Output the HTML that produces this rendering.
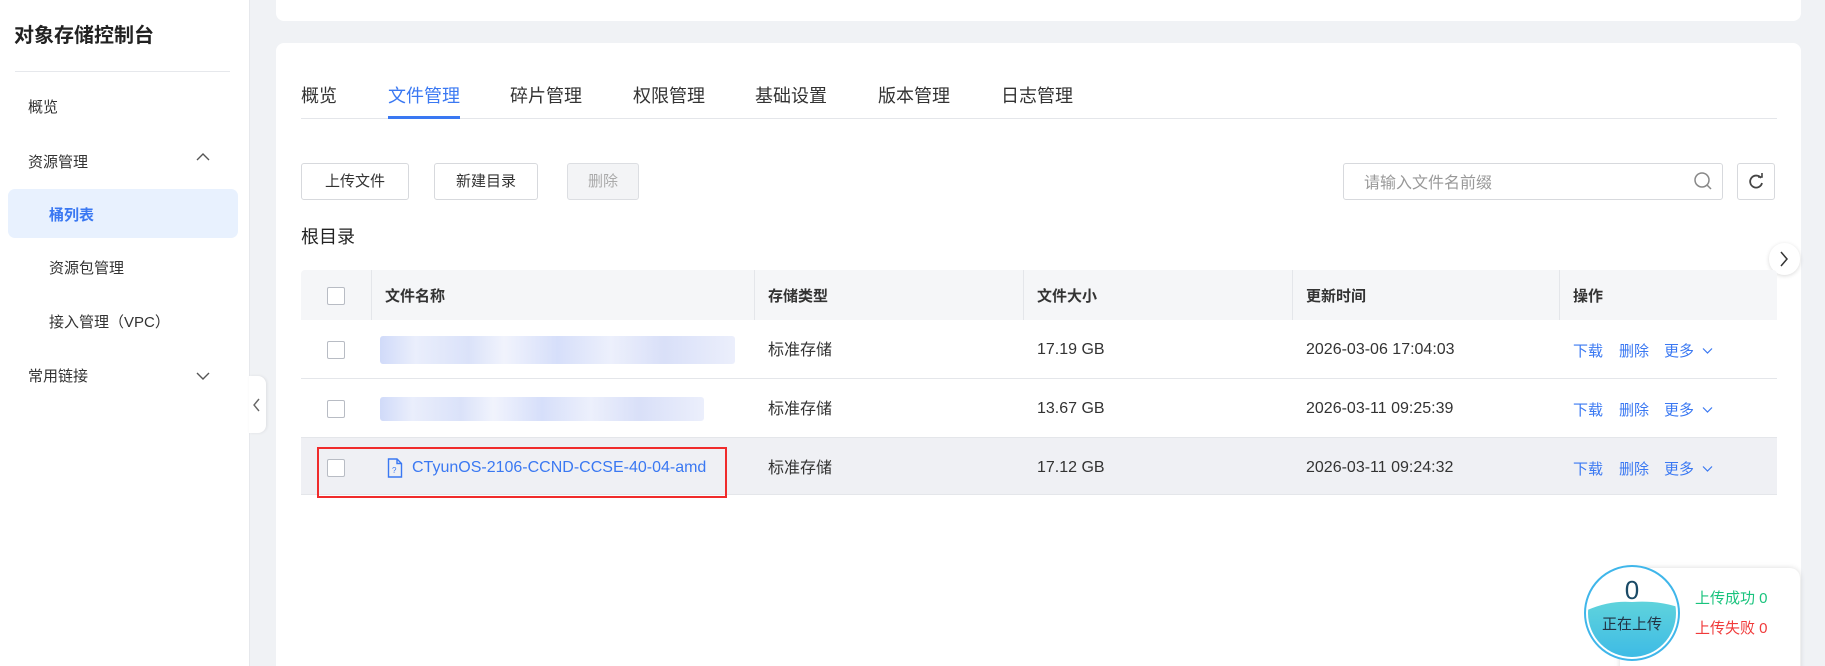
<!DOCTYPE html>
<html><head><meta charset="utf-8">
<style>
*{margin:0;padding:0;box-sizing:border-box}
html,body{width:1825px;height:666px;overflow:hidden}
body{background:#f0f2f5;font-family:"Liberation Sans","Noto Sans CJK SC",sans-serif;color:#333;position:relative}
.a{position:absolute;white-space:nowrap;line-height:1}
.t{transform:translateY(2px)}
.side{position:absolute;left:0;top:0;width:250px;height:666px;background:#fff;border-right:1px solid #e6e8ec}
.card{position:absolute;background:#fff;border-radius:8px}
.tab{font-size:18px;color:#333;top:87px}
.btn{position:absolute;top:163px;height:37px;border:1px solid #d7d9dd;border-radius:3px;font-size:15px;text-align:center;line-height:35px;background:#fff;color:#333}
.cb{position:absolute;width:18px;height:18px;border:1px solid #b8bcc4;border-radius:2px;background:#fff}
.th{font-size:15px;font-weight:bold;color:#333;top:289px}
.td{font-size:16px;color:#333}
.lk{font-size:15px;color:#3a78f2}
.vd{position:absolute;top:270px;width:1px;height:50px;background:#e4e6ea}
.blur{position:absolute;background:linear-gradient(90deg,#c8d4f8,#e6ebfb 10%,#d4ddf8 25%,#eef1fc 35%,#cfd9f9 50%,#e9edfb 65%,#d2daf7 80%,#e8ecfb);opacity:.85;border-radius:3px}
</style></head><body>
<div class="side">
  <div class="a" style="left:14px;top:26px;font-size:20px;font-weight:bold;color:#222">对象存储控制台</div>
  <div class="a" style="left:15px;top:71px;width:215px;height:1px;background:#e6e8ec"></div>
  <div class="a" style="left:28px;top:100px;font-size:15px">概览</div>
  <div class="a" style="left:28px;top:155px;font-size:15px">资源管理</div>
  <svg class="a" style="left:196px;top:152px" width="14" height="10"><path d="M1 8 L7 2 L13 8" fill="none" stroke="#555" stroke-width="1.4"/></svg>
  <div class="a" style="left:8px;top:189px;width:230px;height:49px;background:#e8f1fe;border-radius:7px"></div>
  <div class="a" style="left:49px;top:208px;font-size:15px;font-weight:bold;color:#3a78f2">桶列表</div>
  <div class="a" style="left:49px;top:261px;font-size:15px">资源包管理</div>
  <div class="a" style="left:49px;top:315px;font-size:15px">接入管理（VPC）</div>
  <div class="a" style="left:28px;top:369px;font-size:15px">常用链接</div>
  <svg class="a" style="left:196px;top:371px" width="14" height="10"><path d="M1 2 L7 8 L13 2" fill="none" stroke="#555" stroke-width="1.4"/></svg>
</div>
<div class="a" style="left:249px;top:376px;width:17px;height:57px;background:#fff;border-radius:0 8px 8px 0;box-shadow:1px 0 3px rgba(0,0,0,.08)"></div>
<svg class="a" style="left:252px;top:398px" width="10" height="14"><path d="M7 1 L2 7 L7 13" fill="none" stroke="#666" stroke-width="1.4"/></svg>

<div class="card" style="left:276px;top:-10px;width:1525px;height:31px"></div>
<div class="card" style="left:276px;top:43px;width:1525px;height:623px;border-radius:8px 8px 0 0"></div>

<div class="a tab" style="left:301px">概览</div>
<div class="a tab" style="left:388px;color:#3a78f2">文件管理</div>
<div class="a tab" style="left:510px">碎片管理</div>
<div class="a tab" style="left:633px">权限管理</div>
<div class="a tab" style="left:755px">基础设置</div>
<div class="a tab" style="left:878px">版本管理</div>
<div class="a tab" style="left:1001px">日志管理</div>
<div class="a" style="left:301px;top:118px;width:1476px;height:1px;background:#e4e6ea"></div>
<div class="a" style="left:388px;top:116px;width:72px;height:3px;background:#3a78f2"></div>

<div class="btn" style="left:301px;width:108px">上传文件</div>
<div class="btn" style="left:434px;width:104px">新建目录</div>
<div class="btn" style="left:567px;width:72px;background:#f3f4f6;color:#aaa;border-color:#dcdee2">删除</div>

<div class="a" style="left:1343px;top:163px;width:380px;height:37px;border:1px solid #d7d9dd;border-radius:3px"></div>
<div class="a" style="left:1364px;top:176px;font-size:16px;color:#999">请输入文件名前缀</div>
<svg class="a" style="left:1693px;top:171px" width="20" height="20"><circle cx="9" cy="9" r="7" fill="none" stroke="#888" stroke-width="1.5"/><path d="M14 14 L18 18" stroke="#888" stroke-width="1.5"/></svg>
<div class="a" style="left:1737px;top:163px;width:38px;height:37px;border:1px solid #d7d9dd;border-radius:3px"></div>
<svg class="a" style="left:1748px;top:173px" width="16" height="16"><path d="M13 5 A6 6 0 1 0 14 10" fill="none" stroke="#444" stroke-width="1.8"/><path d="M10 4 L14 4 L14 0" fill="none" stroke="#444" stroke-width="1.6"/></svg>

<div class="a" style="left:301px;top:228px;font-size:18px;color:#222">根目录</div>
<div class="a" style="left:1769px;top:243px;width:31px;height:32px;border-radius:16px;background:#fff;box-shadow:0 1px 4px rgba(0,0,0,.15)"></div>
<svg class="a" style="left:1779px;top:251px" width="10" height="16"><path d="M2 1 L8 8 L2 15" fill="none" stroke="#333" stroke-width="1.5"/></svg>

<div class="a" style="left:301px;top:270px;width:1476px;height:50px;background:#f5f6f8;border-radius:4px 4px 0 0"></div>
<div class="vd" style="left:371px"></div><div class="vd" style="left:754px"></div><div class="vd" style="left:1023px"></div><div class="vd" style="left:1292px"></div><div class="vd" style="left:1559px"></div>
<div class="cb" style="left:327px;top:287px"></div>
<div class="a th" style="left:385px">文件名称</div>
<div class="a th" style="left:768px">存储类型</div>
<div class="a th" style="left:1037px">文件大小</div>
<div class="a th" style="left:1306px">更新时间</div>
<div class="a th" style="left:1573px">操作</div>

<div class="a" style="left:301px;top:378px;width:1476px;height:1px;background:#e4e6ea"></div>
<div class="a" style="left:301px;top:437px;width:1476px;height:58px;background:#eff0f4;border-top:1px solid #e4e6ea;border-bottom:1px solid #e4e6ea"></div>

<div class="cb" style="left:327px;top:341px"></div>
<div class="blur" style="left:380px;top:336px;width:355px;height:28px"></div>
<div class="a td" style="left:768px;top:343px">标准存储</div>
<div class="a td" style="left:1037px;top:342px">17.19 GB</div>
<div class="a td" style="left:1306px;top:342px">2026-03-06 17:04:03</div>

<div class="cb" style="left:327px;top:400px"></div>
<div class="blur" style="left:380px;top:397px;width:324px;height:24px"></div>
<div class="a td" style="left:768px;top:402px">标准存储</div>
<div class="a td" style="left:1037px;top:401px">13.67 GB</div>
<div class="a td" style="left:1306px;top:401px">2026-03-11 09:25:39</div>

<div class="cb" style="left:327px;top:459px"></div>
<div class="a" style="left:317px;top:447px;width:410px;height:51px;border:2px solid #f02b2b"></div>
<svg class="a" style="left:387px;top:458px" width="16" height="20"><path d="M1.5 1 H10 L14.5 5.5 V19 H1.5 Z M10 1 V5.5 H14.5" fill="none" stroke="#3a78f2" stroke-width="1.4"/><text x="5" y="15" font-size="8" fill="#3a78f2" font-family="Liberation Sans">?</text></svg>
<div class="a" style="left:412px;top:460px;font-size:16px;color:#3a78f2">CTyunOS-2106-CCND-CCSE-40-04-amd</div>
<div class="a td" style="left:768px;top:461px">标准存储</div>
<div class="a td" style="left:1037px;top:460px">17.12 GB</div>
<div class="a td" style="left:1306px;top:460px">2026-03-11 09:24:32</div>

<div class="a lk" style="left:1573px;top:344px">下载</div><div class="a lk" style="left:1619px;top:344px">删除</div><div class="a lk" style="left:1664px;top:344px">更多</div>
<div class="a lk" style="left:1573px;top:403px">下载</div><div class="a lk" style="left:1619px;top:403px">删除</div><div class="a lk" style="left:1664px;top:403px">更多</div>
<div class="a lk" style="left:1573px;top:462px">下载</div><div class="a lk" style="left:1619px;top:462px">删除</div><div class="a lk" style="left:1664px;top:462px">更多</div>
<svg class="a" style="left:1702px;top:347px" width="11" height="8"><path d="M1 1.5 L5.5 6 L10 1.5" fill="none" stroke="#3a78f2" stroke-width="1.2"/></svg>
<svg class="a" style="left:1702px;top:406px" width="11" height="8"><path d="M1 1.5 L5.5 6 L10 1.5" fill="none" stroke="#3a78f2" stroke-width="1.2"/></svg>
<svg class="a" style="left:1702px;top:465px" width="11" height="8"><path d="M1 1.5 L5.5 6 L10 1.5" fill="none" stroke="#3a78f2" stroke-width="1.2"/></svg>

<div class="a" style="left:1620px;top:568px;width:180px;height:110px;background:#fff;border-radius:10px;box-shadow:0 0 6px rgba(0,0,0,.15)"></div>
<svg class="a" style="left:1583px;top:564px" width="98" height="98">
<defs><clipPath id="c"><circle cx="49" cy="49" r="44"/></clipPath><linearGradient id="g" x1="0" y1="0" x2="0" y2="1"><stop offset="0" stop-color="#5fd3dc"/><stop offset="1" stop-color="#3bb9e6"/></linearGradient></defs>
<circle cx="49" cy="49" r="47" fill="#fff" stroke="#3fb6ea" stroke-width="2"/>
<path d="M0 48 Q25 36 49 38 Q75 36 98 44 V98 H0 Z" fill="url(#g)" clip-path="url(#c)"/>
<text x="49" y="35" font-size="26" text-anchor="middle" fill="#1a4a66" font-family="Liberation Sans">0</text>
<text x="49" y="65" font-size="15" text-anchor="middle" fill="#234" font-family="Liberation Sans,Noto Sans CJK SC,sans-serif">正在上传</text>
</svg>
<div class="a" style="left:1695px;top:591px;font-size:15px;color:#19c37d">上传成功 0</div>
<div class="a" style="left:1695px;top:621px;font-size:15px;color:#f03a3a">上传失败 0</div>
</body></html>
